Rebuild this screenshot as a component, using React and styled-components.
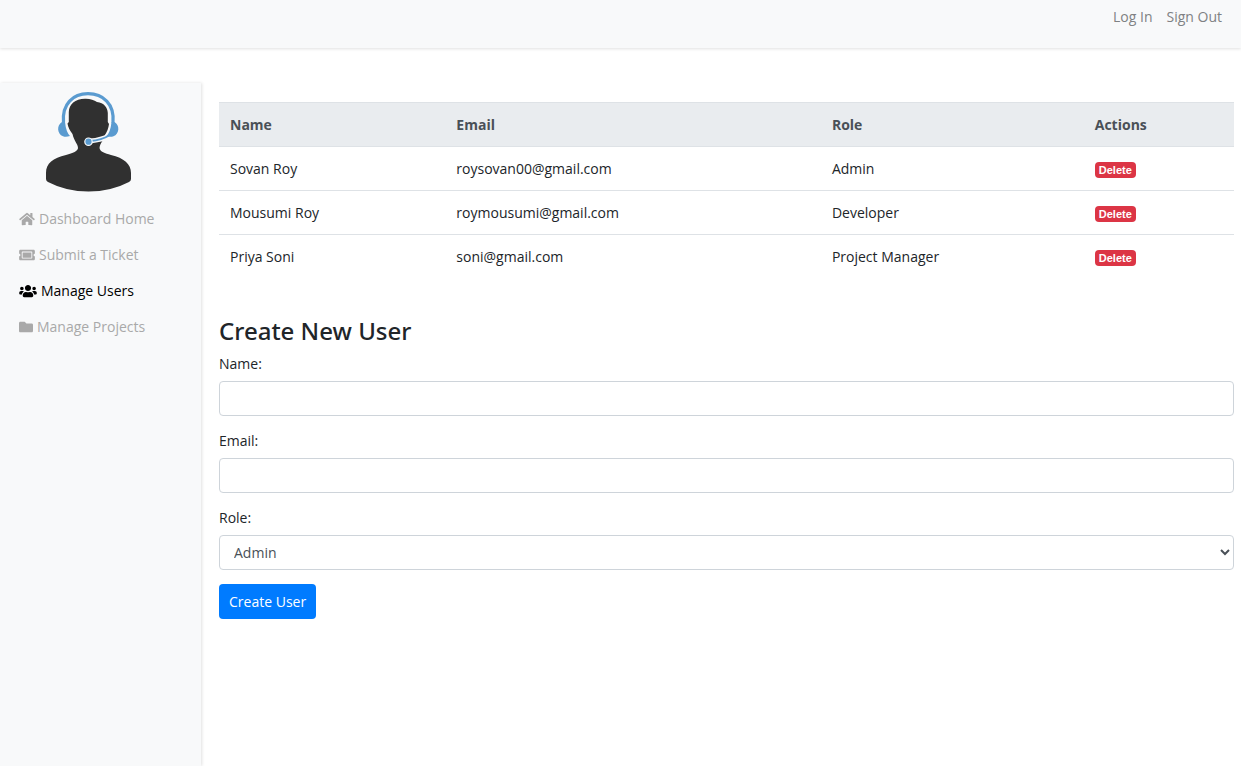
import React from 'react';
import styled, { createGlobalStyle } from 'styled-components';
import { FaHome, FaTicketAlt, FaUsers, FaFolder } from 'react-icons/fa';

const GlobalStyle = createGlobalStyle`
  *, *::before, *::after { box-sizing: border-box; }
  body {
    margin: 0;
    background: #fff;
    color: #212529;
    font-family: "Open Sans", "Noto Sans", sans-serif;
    font-size: 14px;
    line-height: 21px;
  }
  input, select, button { font: inherit; }
`;

const Page = styled.div`
  display: flex;
  flex-direction: column;
  min-height: 100vh;
`;

const TopBar = styled.header`
  display: flex;
  justify-content: flex-end;
  gap: 14px;
  height: 48px;
  padding: 6px 19px;
  background: #f8f9fa;
  box-shadow: 0 1px 3px rgba(0, 0, 0, 0.12);
`;

const TopLink = styled.a`
  color: #7f8183;
  text-decoration: none;
`;

const Body = styled.div`
  display: flex;
  flex: 1;
  margin-top: 35px;
`;

const Sidebar = styled.aside`
  flex: 0 0 201px;
  background: #f8f9fa;
  box-shadow: 1px 0 3px rgba(0, 0, 0, 0.12);
`;

const Avatar = styled.svg`
  display: block;
  width: 88px;
  height: 101px;
  margin: 8px auto 16px 44px;
`;

const Menu = styled.nav`
  display: flex;
  flex-direction: column;
  gap: 15px;
  padding-left: 19px;
`;

const MenuLink = styled.a`
  display: flex;
  align-items: center;
  gap: 4px;
  color: ${(p) => (p.$active ? '#000' : '#a9a9a9')};
  text-decoration: none;

  svg {
    flex: none;
    width: ${(p) => p.$iconWidth}px;
    height: 14px;
  }
`;

const Main = styled.main`
  flex: 1;
  min-width: 0;
  padding: 19px 7px 14px 18px;
`;

const Table = styled.table`
  width: 100%;
  margin-bottom: 37px;
  border-collapse: collapse;
  table-layout: fixed;
`;

const HeadCell = styled.th`
  width: ${(p) => p.$width};
  height: 44px;
  padding: 0 11px;
  border-top: 1px solid #dee2e6;
  background: #e9ecef;
  color: #495057;
  font-weight: 700;
  text-align: left;
`;

const Cell = styled.td`
  height: 44px;
  padding: 0 11px;
  border-top: 1px solid #dee2e6;
`;

const DeleteButton = styled.button`
  display: block;
  height: 16px;
  margin-top: 2px;
  padding: 0 4px;
  border: 0;
  border-radius: 4px;
  background: #dc3545;
  color: #fff;
  font-family: "Liberation Sans", sans-serif;
  font-size: 11px;
  font-weight: 700;
  line-height: 16px;
`;

const Title = styled.h2`
  margin: 0 0 7px;
  font-family: "Noto Sans", "Open Sans", sans-serif;
  font-size: 24px;
  font-weight: 500;
  line-height: 30px;
`;

const Field = styled.div`
  margin-bottom: 14px;
`;

const Label = styled.label`
  display: block;
  margin-bottom: 7px;
`;

const Input = styled.input`
  display: block;
  width: 100%;
  height: 35px;
  padding: 5px 11px;
  border: 1px solid #ced4da;
  border-radius: 4px;
  background: #fff;
  color: #495057;
`;

const Select = styled(Input).attrs({ as: 'select' })`
  padding: 5px 1px 5px 10px;
`;

const SubmitButton = styled.button`
  height: 35px;
  padding: 0 10px;
  border: 0;
  border-radius: 4px;
  background: #007bff;
  color: #fff;
`;

const menu = [
  { label: 'Dashboard Home', Icon: FaHome, iconWidth: 16 },
  { label: 'Submit a Ticket', Icon: FaTicketAlt, iconWidth: 16 },
  { label: 'Manage Users', Icon: FaUsers, iconWidth: 18, active: true },
  { label: 'Manage Projects', Icon: FaFolder, iconWidth: 14 },
];

const columns = [
  ['Name', '22.3%'],
  ['Email', '37%'],
  ['Role', '25.9%'],
  ['Actions', '14.8%'],
];

const users = [
  ['Sovan Roy', 'roysovan00@gmail.com', 'Admin'],
  ['Mousumi Roy', 'roymousumi@gmail.com', 'Developer'],
  ['Priya Soni', 'soni@gmail.com', 'Project Manager'],
];

function SupportAvatar() {
  return (
    <Avatar viewBox="0 0 88 101" role="img" aria-label="Support agent">
      <path
        fill="#303030"
        d="M2 82C2 72 9 67 22 64C29 62 34 60 34 57C34 53 30 50 28.500 43C26 40 24 36 23.500 32.500L24.800 31V21C25 13 31 8 41 7.700C46 7.500 50 9 53 11C60 12 63.500 16 63.800 22V31L65 33C64.500 37 63 41 61 44C60 49 56 52 55.500 57C56 61 61 62 67 64C80 67 87 73 87 82V88Q87 90 85 91Q67 100.500 44.500 100.500T4 91Q2 90 2 88Z"
      />
      <g fill="none" strokeLinecap="round">
        <path d="M65 44.500Q58 49 46 50" stroke="#f8f9fa" strokeWidth="5" />
        <path d="M19.500 31C18 13 29 2.700 44 2.700S70.500 13 69 31" stroke="#5a9bd0" strokeWidth="3.200" />
        <path d="M65 44.500Q58 49 46 50" stroke="#5a9bd0" strokeWidth="2" />
      </g>
      <path
        fill="#5a9bd0"
        d="M18 31C12.500 34 13 43 19 45.300Q22 46.500 26 45Q22 41 21 31ZM70.500 31C76 34 75.500 43 69.500 45.300Q66 46.500 62.500 45Q66.500 41 67.500 31Z"
      />
      <circle cx="44.500" cy="50.700" r="3.700" fill="#5a9bd0" stroke="#f8f9fa" strokeWidth="1.200" />
    </Avatar>
  );
}

export default function App() {
  return (
    <Page>
      <GlobalStyle />
      <TopBar>
        <TopLink href="#login">Log In</TopLink>
        <TopLink href="#signout">Sign Out</TopLink>
      </TopBar>
      <Body>
        <Sidebar>
          <SupportAvatar />
          <Menu>
            {menu.map(({ label, Icon, iconWidth, active }) => (
              <MenuLink key={label} href="#menu" $active={active} $iconWidth={iconWidth}>
                <Icon />
                {label}
              </MenuLink>
            ))}
          </Menu>
        </Sidebar>
        <Main>
          <Table>
            <thead>
              <tr>
                {columns.map(([name, width]) => (
                  <HeadCell key={name} scope="col" $width={width}>{name}</HeadCell>
                ))}
              </tr>
            </thead>
            <tbody>
              {users.map(([name, email, role]) => (
                <tr key={email}>
                  <Cell>{name}</Cell>
                  <Cell>{email}</Cell>
                  <Cell>{role}</Cell>
                  <Cell><DeleteButton type="button">Delete</DeleteButton></Cell>
                </tr>
              ))}
            </tbody>
          </Table>
          <form onSubmit={(e) => e.preventDefault()}>
            <Title>Create New User</Title>
            <Field>
              <Label htmlFor="name">Name:</Label>
              <Input id="name" type="text" />
            </Field>
            <Field>
              <Label htmlFor="email">Email:</Label>
              <Input id="email" type="email" />
            </Field>
            <Field>
              <Label htmlFor="role">Role:</Label>
              <Select id="role" defaultValue="Admin">
                <option>Admin</option>
                <option>Developer</option>
                <option>Project Manager</option>
              </Select>
            </Field>
            <SubmitButton type="submit">Create User</SubmitButton>
          </form>
        </Main>
      </Body>
    </Page>
  );
}
